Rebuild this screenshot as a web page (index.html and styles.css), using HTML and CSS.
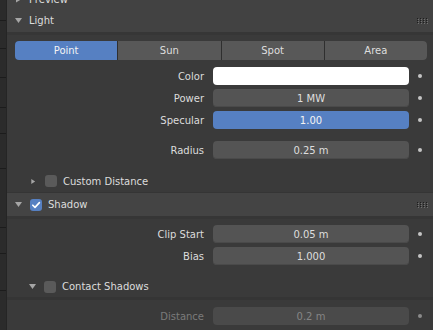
FILE: index.html
```html
<!DOCTYPE html>
<html>
<head>
<meta charset="utf-8">
<link rel="stylesheet" href="styles.css">
</head>
<body>
<div class="app">
  <div class="strip">
    <div class="seg" style="height:21px"></div>
    <div class="seg" style="height:28px"></div>
    <div class="seg" style="height:29px"></div>
    <div class="seg" style="height:30px"></div>
    <div class="seg" style="height:26px"></div>
    <div class="seg" style="height:35px"></div>
    <div class="seg" style="height:59px"></div>
    <div class="seg" style="height:26px"></div>
    <div class="seg" style="height:37px"></div>
  </div>
  <div class="props">
    <div class="head preview">
      <span class="tri"><svg width="7" height="7" viewBox="0 0 7 7"><polygon points="1,0.5 6,3.5 1,6.5" fill="#a6a6a6"/></svg></span>
      <span class="title">Preview</span>
    </div>

    <div class="head">
      <span class="tri"><svg width="7" height="7" viewBox="0 0 7 7"><polygon points="0,1 7,1 3.5,6" fill="#a6a6a6"/></svg></span>
      <span class="title">Light</span>
      <span class="grip"><svg width="12" height="6" viewBox="0 0 12 6"><g fill="#1e1e1e"><rect x="0" y="0" width="1" height="1"/><rect x="3" y="0" width="1" height="1"/><rect x="6" y="0" width="1" height="1"/><rect x="9" y="0" width="1" height="1"/><rect x="0" y="2" width="1" height="1"/><rect x="3" y="2" width="1" height="1"/><rect x="6" y="2" width="1" height="1"/><rect x="9" y="2" width="1" height="1"/><rect x="0" y="4" width="1" height="1"/><rect x="3" y="4" width="1" height="1"/><rect x="6" y="4" width="1" height="1"/><rect x="9" y="4" width="1" height="1"/></g><g fill="#707070"><rect x="1" y="1" width="1" height="1"/><rect x="4" y="1" width="1" height="1"/><rect x="7" y="1" width="1" height="1"/><rect x="10" y="1" width="1" height="1"/><rect x="1" y="3" width="1" height="1"/><rect x="4" y="3" width="1" height="1"/><rect x="7" y="3" width="1" height="1"/><rect x="10" y="3" width="1" height="1"/><rect x="1" y="5" width="1" height="1"/><rect x="4" y="5" width="1" height="1"/><rect x="7" y="5" width="1" height="1"/><rect x="10" y="5" width="1" height="1"/></g></svg></span>
    </div>
    <div class="body">
      <div class="enum">
        <div class="seg-btn active">Point</div>
        <div class="seg-btn">Sun</div>
        <div class="seg-btn">Spot</div>
        <div class="seg-btn">Area</div>
      </div>
      <div class="rows first">
        <div class="prop"><span class="label">Color</span><span class="field white"></span><span class="dot"></span></div>
        <div class="prop"><span class="label">Power</span><span class="field">1 MW</span><span class="dot"></span></div>
        <div class="prop"><span class="label">Specular</span><span class="field blue">1.00</span><span class="dot"></span></div>
      </div>
      <div class="rows radius">
        <div class="prop"><span class="label">Radius</span><span class="field">0.25 m</span><span class="dot"></span></div>
      </div>
      <div class="subhead closed">
        <span class="tri"><svg width="7" height="7" viewBox="0 0 7 7"><polygon points="1.5,0.5 6,3.5 1.5,6.5" fill="#a6a6a6"/></svg></span>
        <span class="check"></span>
        <span class="title">Custom Distance</span>
      </div>
    </div>

    <div class="head shadow">
      <span class="tri"><svg width="7" height="7" viewBox="0 0 7 7"><polygon points="0,1 7,1 3.5,6" fill="#a6a6a6"/></svg></span>
      <span class="check on"><svg width="12" height="12" viewBox="0 0 12 12"><polyline points="2.8,6.2 5,8.4 9.4,3.6" fill="none" stroke="#ffffff" stroke-width="1.6" stroke-linecap="round" stroke-linejoin="round"/></svg></span>
      <span class="title">Shadow</span>
      <span class="grip"><svg width="12" height="6" viewBox="0 0 12 6"><g fill="#1e1e1e"><rect x="0" y="0" width="1" height="1"/><rect x="3" y="0" width="1" height="1"/><rect x="6" y="0" width="1" height="1"/><rect x="9" y="0" width="1" height="1"/><rect x="0" y="2" width="1" height="1"/><rect x="3" y="2" width="1" height="1"/><rect x="6" y="2" width="1" height="1"/><rect x="9" y="2" width="1" height="1"/><rect x="0" y="4" width="1" height="1"/><rect x="3" y="4" width="1" height="1"/><rect x="6" y="4" width="1" height="1"/><rect x="9" y="4" width="1" height="1"/></g><g fill="#707070"><rect x="1" y="1" width="1" height="1"/><rect x="4" y="1" width="1" height="1"/><rect x="7" y="1" width="1" height="1"/><rect x="10" y="1" width="1" height="1"/><rect x="1" y="3" width="1" height="1"/><rect x="4" y="3" width="1" height="1"/><rect x="7" y="3" width="1" height="1"/><rect x="10" y="3" width="1" height="1"/><rect x="1" y="5" width="1" height="1"/><rect x="4" y="5" width="1" height="1"/><rect x="7" y="5" width="1" height="1"/><rect x="10" y="5" width="1" height="1"/></g></svg></span>
    </div>
    <div class="body shadow-body">
      <div class="rows">
        <div class="prop"><span class="label">Clip Start</span><span class="field">0.05 m</span><span class="dot"></span></div>
        <div class="prop"><span class="label">Bias</span><span class="field">1.000</span><span class="dot"></span></div>
      </div>
      <div class="subhead">
        <span class="tri"><svg width="7" height="7" viewBox="0 0 7 7"><polygon points="0,1 7,1 3.5,6" fill="#a6a6a6"/></svg></span>
        <span class="check"></span>
        <span class="title">Contact Shadows</span>
      </div>
      <div class="subbody">
        <div class="rows">
          <div class="prop disabled"><span class="label">Distance</span><span class="field">0.2 m</span><span class="dot"></span></div>
        </div>
      </div>
    </div>
  </div>
</div>
</body>
</html>
```
FILE: styles.css
```css
* { box-sizing: border-box; }
html, body { margin: 0; padding: 0; }
body {
  width: 433px;
  height: 330px;
  overflow: hidden;
  background: #3a3a3a;
  font-family: "DejaVu Sans", sans-serif;
  font-size: 10px;
  color: #dcdcdc;
}
.app { display: flex; height: 330px; }
.strip {
  width: 7px;
  flex: none;
  background: #2b2b2b;
  border-right: 1px solid #252525;
  display: flex;
  flex-direction: column;
}
.strip .seg { flex: none; border-bottom: 1px solid #1c1c1c; }
.props { flex: 1; min-width: 0; display: flex; flex-direction: column; }

.head {
  display: flex;
  align-items: center;
  height: 23px;
  background: #424242;
  padding: 0 3px 0 8px;
  flex: none;
}
.head.preview { height: 20px; margin-top: -11px; }
.head.shadow { height: 24px; background: #444444; border-top: 1px solid #353535; }
.tri { width: 7px; height: 7px; display: flex; flex: none; }
.head .tri { margin-right: 7px; }
.head.shadow .tri { margin-right: 8px; }
.title { flex: 1; white-space: nowrap; }
.grip { display: flex; width: 12px; height: 6px; margin-right: 1px; }

.body {
  background: #3a3a3a;
  border-top: 3px solid #363636;
  padding-top: 6px;
  flex: none;
}
.enum {
  display: flex;
  gap: 1px;
  height: 19px;
  margin: 0 6px 0 8px;
  border-radius: 4px;
  overflow: hidden;
  background: #2f2f2f;
}
.seg-btn {
  flex: 1;
  background: #585858;
  display: flex;
  align-items: center;
  justify-content: center;
  color: #dedede;
}
.seg-btn.active { background: #5680c2; color: #f4f4f4; }

.rows { display: flex; flex-direction: column; gap: 4px; }
.rows.first { margin-top: 7px; }
.rows.radius { margin-top: 12px; }
.prop {
  display: grid;
  grid-template-columns: 1fr 196px 24px;
  height: 18px;
  align-items: center;
}
.label { text-align: right; padding-right: 9px; white-space: nowrap; }
.field {
  height: 18px;
  background: #545454;
  border-radius: 4px;
  display: flex;
  align-items: center;
  justify-content: center;
  color: #dedede;
  box-shadow: inset 0 -1px 0 #4a4a4a;
}
.field.white { background: #ffffff; box-shadow: none; }
.field.blue { background: #5680c2; color: #f4f4f4; box-shadow: none; }
.dot {
  width: 4px;
  height: 4px;
  border-radius: 50%;
  background: #c4c4c4;
  margin-left: 9px;
}
.prop.disabled .label { color: #7a7a7a; }
.prop.disabled .field { background: #4a4a4a; color: #858585; box-shadow: none; }
.prop.disabled .dot { background: #8a8a8a; }

.subhead {
  display: flex;
  align-items: center;
  height: 21px;
  margin-top: 11px;
  padding-left: 22px;
}
.subhead.closed { height: 22px; }
.subhead.closed .tri { margin-left: 1px; width: 6px; }
.subhead .tri { margin-right: 8px; }
.check {
  width: 12px;
  height: 12px;
  border-radius: 3px;
  background: #5a5a5a;
  margin-right: 6px;
  flex: none;
  display: flex;
}
.subhead.closed .check { margin-left: 1px; }
.check.on { background: #5680c2; }
.subbody {
  border-top: 3px solid #353535;
  padding-top: 7px;
}
.shadow-body { padding-top: 6px; }
```
